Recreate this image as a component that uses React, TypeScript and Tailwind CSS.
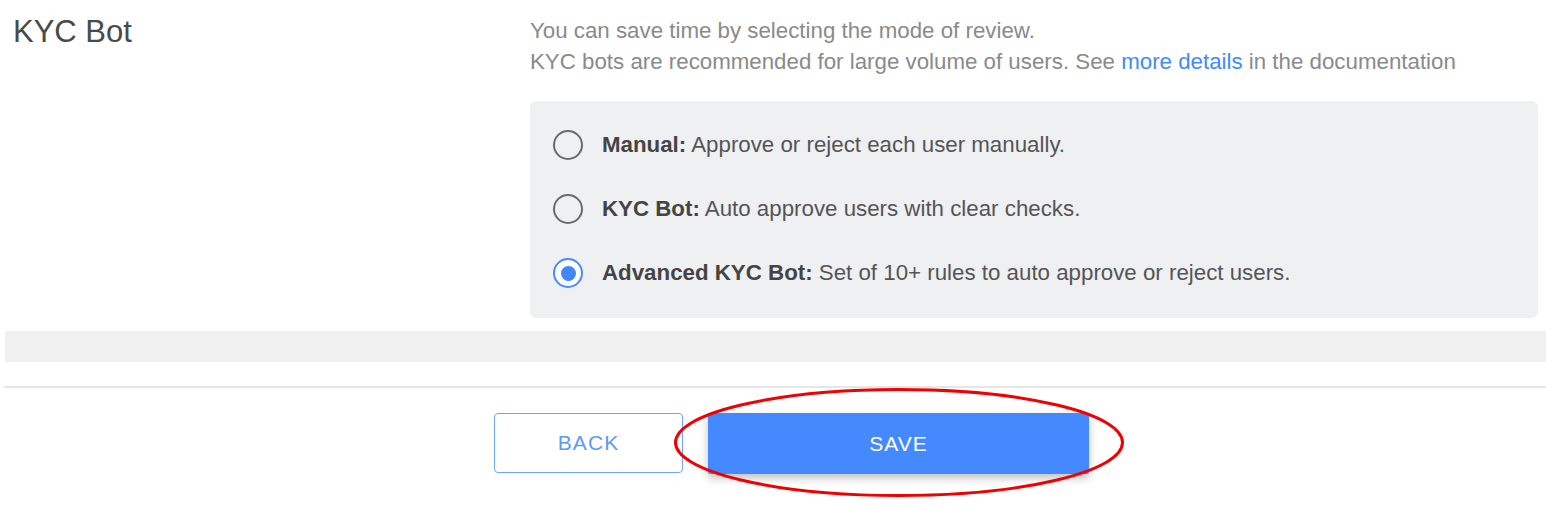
import React from "react";

function Radio({ checked }: { checked?: boolean }) {
  if (checked) {
    return (
      <span className="flex h-[30px] w-[30px] shrink-0 items-center justify-center rounded-full border-[2.5px] border-[#4a8af6] bg-white">
        <span className="h-[15px] w-[15px] rounded-full bg-[#4285f4]" />
      </span>
    );
  }
  return <span className="h-[30px] w-[30px] shrink-0 rounded-full border-[2.5px] border-[#6a6a6a] bg-transparent" />;
}

function Option({ label, text, checked }: { label: string; text: string; checked?: boolean }) {
  return (
    <div className="flex h-[64px] items-center gap-[19px]">
      <Radio checked={checked} />
      <p className="text-[22.3px] leading-[26px] text-[#555555]">
        <span className="font-bold text-[#444444]">{label}</span> {text}
      </p>
    </div>
  );
}

export default function App() {
  return (
    <div
      className="relative h-[508px] w-full overflow-hidden bg-white"
      style={{ fontFamily: '"Liberation Sans", Arial, sans-serif' }}
    >
      <div className="flex">
        <div className="w-[530px] shrink-0 pl-[13px] pt-[13px]">
          <h1 className="text-[31px] leading-[37px] text-[#4a4a4a]">KYC Bot</h1>
        </div>
        <div className="flex-1 pr-[8px] pt-[15px]">
          <p className="text-[22.3px] leading-[31px] text-[#8a8a8a]">
            You can save time by selecting the mode of review.
            <br />
            KYC bots are recommended for large volume of users. See{" "}
            <a className="text-[#3f8cf7]">more details</a> in the documentation
          </p>
          <div className="mt-[24px] rounded-[6px] bg-[#eff0f2] pb-[13px] pl-[23px] pt-[12px]">
            <Option label="Manual:" text="Approve or reject each user manually." />
            <Option label="KYC Bot:" text="Auto approve users with clear checks." />
            <Option label="Advanced KYC Bot:" text="Set of 10+ rules to auto approve or reject users." checked />
          </div>
        </div>
      </div>

      <div className="ml-[5px] mt-[13px] h-[31px] bg-[#f0f0f0]" />
      <div className="ml-[4px] mt-[24px] h-[2px] bg-[#e6e6e6]" />

      <div className="flex gap-[25px] pl-[494px] pt-[25px]">
        <button className="flex h-[60px] w-[189px] items-center justify-center rounded-[4px] border border-[#6ea6fb] bg-white text-[21px] tracking-[0.05em] text-[#5b9af7]">
          BACK
        </button>
        <button className="flex h-[61px] w-[381px] items-center justify-center rounded-[2px] bg-[#4589ff] text-[21px] tracking-[0.05em] text-white shadow-[0_4px_8px_rgba(0,0,0,0.25)]">
          SAVE
        </button>
      </div>

      <svg
        className="pointer-events-none absolute left-[673px] top-[387px]"
        width="452"
        height="111"
        viewBox="0 0 452 111"
      >
        <ellipse cx="226" cy="55.5" rx="223.5" ry="53" fill="none" stroke="#f00000" strokeWidth="3" />
      </svg>
    </div>
  );
}
